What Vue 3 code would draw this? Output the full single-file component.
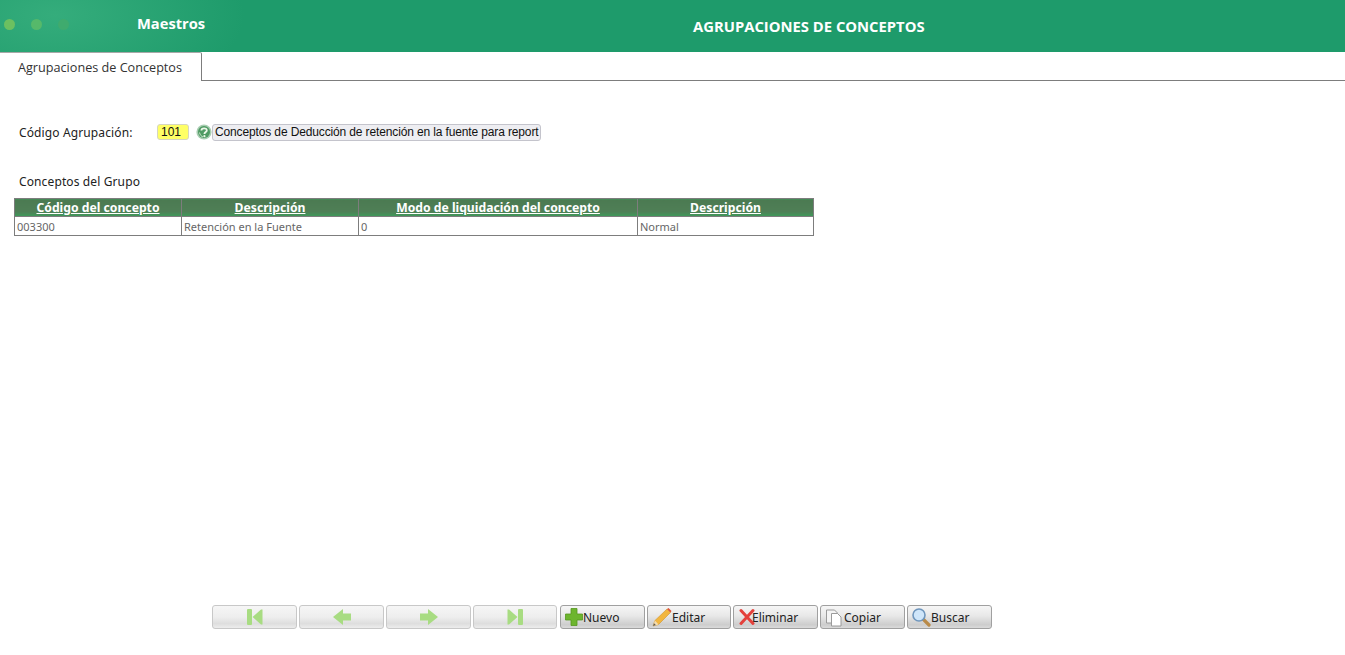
<script setup>
const columns = [
  { title: 'Código del concepto', value: '003300', width: '167px' },
  { title: 'Descripción', value: 'Retención en la Fuente', width: '177px' },
  { title: 'Modo de liquidación del concepto', value: '0', width: '279px' },
  { title: 'Descripción', value: 'Normal', width: '176px' }
]
</script>

<template>
  <div class="page">
    <header class="topbar">
      <div class="brand">
        <div class="dots">
          <span class="dot d1"></span>
          <span class="dot d2"></span>
          <span class="dot d3"></span>
        </div>
        <span class="module">Maestros</span>
      </div>
      <h1 class="title">AGRUPACIONES DE CONCEPTOS</h1>
    </header>

    <nav class="tabs">
      <div class="tab">Agrupaciones de Conceptos</div>
    </nav>

    <main class="content">
      <div class="field-row">
        <label class="label">Código Agrupación:</label>
        <div class="code">101</div>
        <svg class="help" viewBox="0 0 16 16" width="16" height="16">
          <circle cx="8" cy="8" r="7.600" fill="#a9ceb2" />
          <circle cx="8" cy="8" r="6" fill="#4f9a63" />
          <path d="M5.400 6.400C5.400 3.800 10.800 3.600 10.800 6.400 10.800 8 8.400 8 8.400 10" fill="none" stroke="#eef7ea" stroke-width="1.800" />
          <path d="M3.500 8.500C4 11 5.500 12.500 7 13" fill="none" stroke="#cfe6cf" stroke-width="1" />
          <circle cx="8.400" cy="12.200" r="1.100" fill="#eef7ea" />
        </svg>
        <div class="desc">Conceptos de Deducción de retención en la fuente para report</div>
      </div>

      <div class="group-title">Conceptos del Grupo</div>

      <table class="grid">
        <colgroup>
          <col v-for="(c, i) in columns" :key="i" :style="{ width: c.width }" />
        </colgroup>
        <thead>
          <tr>
            <th v-for="(c, i) in columns" :key="i"><a>{{ c.title }}</a></th>
          </tr>
        </thead>
        <tbody>
          <tr>
            <td v-for="(c, i) in columns" :key="i">{{ c.value }}</td>
          </tr>
        </tbody>
      </table>
    </main>

    <footer class="toolbar">
      <button class="btn nav">
        <svg viewBox="0 0 20 20" width="20" height="20">
          <rect x="2" y="2" width="5" height="16" rx="1" fill="#a8dc82" />
          <path d="M7.500 10 16 2.500h1.500v15H16z" fill="#a8dc82" />
        </svg>
      </button>
      <button class="btn nav">
        <svg viewBox="0 0 20 20" width="20" height="20">
          <path d="M1 10 11 2v4.500h8v7h-8V18z" fill="#a8dc82" />
        </svg>
      </button>
      <button class="btn nav">
        <svg viewBox="0 0 20 20" width="20" height="20">
          <path d="M19 10 9 2v4.500H1v7h8V18z" fill="#a8dc82" />
        </svg>
      </button>
      <button class="btn nav last">
        <svg viewBox="0 0 20 20" width="20" height="20">
          <rect x="13" y="2" width="5" height="16" rx="1" fill="#a8dc82" />
          <path d="M12.500 10 4 2.500H2.500v15H4z" fill="#a8dc82" />
        </svg>
      </button>
      <button class="btn add">
        <svg viewBox="0 0 20 20" width="20" height="20">
          <path d="M7 1.500h6v5.500h5.500v6H13v5.500H7V13H1.500V7H7z" fill="#6db52e" stroke="#55971f" stroke-width=".8" />
        </svg>
        <span>Nuevo</span>
      </button>
      <button class="btn edit">
        <svg viewBox="0 0 20 20" width="20" height="20">
          <path d="M1 19 3 13.500 15 2l3.500 3.500L6.500 17.500z" fill="#f2b63f" stroke="#d0932c" stroke-width=".6" />
          <path d="M15 2l3.500 3.500 1-1.500L16.500 1z" fill="#e0553d" />
          <path d="M1 19 3 13.500 6.500 17.500z" fill="#f3dcb0" />
          <path d="M1 19 2 16.200 3.800 18z" fill="#555" />
        </svg>
        <span>Editar</span>
      </button>
      <button class="btn del">
        <svg viewBox="0 0 16 20" width="16" height="20">
          <path d="M2 3.500 14 16.500M14 3.500 2 16.500" fill="none" stroke="#e4413c" stroke-width="3" stroke-linecap="round" />
        </svg>
        <span>Eliminar</span>
      </button>
      <button class="btn">
        <svg viewBox="0 0 20 20" width="20" height="20">
          <path d="M2.500 3h8l3 3v10h-11z" fill="#f4f4f4" stroke="#9a9a9a" />
          <path d="M7.500 6.500h6l3.500 3.500v9H7.500z" fill="#fff" stroke="#9a9a9a" />
        </svg>
        <span>Copiar</span>
      </button>
      <button class="btn">
        <svg viewBox="0 0 20 20" width="20" height="20">
          <path d="M12 12l6 6" stroke="#b98a48" stroke-width="3.200" stroke-linecap="round" />
          <circle cx="8" cy="8" r="6" fill="#cfe6fa" stroke="#6f96bd" stroke-width="1.600" />
        </svg>
        <span>Buscar</span>
      </button>
    </footer>
  </div>
</template>

<style>
html,
body {
  margin: 0;
  background: #fff;
}
</style>

<style scoped>
.page {
  width: 1345px;
  height: 655px;
  display: flex;
  flex-direction: column;
  overflow: hidden;
  background: #fff;
}

.topbar {
  height: 52px;
  flex: none;
  display: flex;
  background:
    radial-gradient(ellipse 190px 90px at 55px 15px, rgba(75, 190, 140, 0.5), rgba(30, 155, 107, 0) 100%),
    #1e9b6b;
  color: #fff;
  font-family: "Open Sans", sans-serif;
  font-weight: 700;
}

.brand {
  width: 272px;
  flex: none;
  display: flex;
  align-items: center;
  padding-bottom: 4px;
  box-sizing: border-box;
}

.dots {
  width: 137px;
  flex: none;
  display: flex;
  gap: 16px;
  padding-left: 4px;
  box-sizing: border-box;
}

.dot {
  width: 11px;
  height: 11px;
  border-radius: 50%;
}

.d1 { background: #6cc060; }
.d2 { background: #56b96a; }
.d3 { background: #3fab6e; }

.module {
  font-size: 14.700px;
  line-height: 16px;
  margin-top: -2px;
}

.title {
  margin: 0;
  flex: 1;
  padding: 17px 0 0 421px;
  font-size: 14.800px;
  line-height: 18px;
  font-weight: 700;
}

.tabs {
  height: 29px;
  flex: none;
  box-sizing: border-box;
  border-bottom: 1px solid #7d7d7d;
  display: flex;
}

.tab {
  width: 202px;
  height: 29px;
  box-sizing: border-box;
  padding: 7px 0 0 18px;
  background: #fff;
  border-right: 1px solid #7d7d7d;
  border-top: 1px solid #a8a8a8;
  border-top-right-radius: 2px;
  font-family: "Open Sans", sans-serif;
  font-size: 12.650px;
  line-height: 15px;
  color: #333;
}

.content {
  flex: 1;
  padding: 42px 0 0 14px;
}

.field-row {
  display: flex;
  align-items: center;
  height: 18px;
  padding-left: 5px;
}

.label {
  width: 138px;
  flex: none;
  font-family: "Noto Sans", sans-serif;
  font-size: 12px;
  letter-spacing: 0.12px;
  color: #222;
}

.code {
  width: 32px;
  height: 16px;
  flex: none;
  box-sizing: border-box;
  background: #ffff66;
  border: 1px solid #d6d6c0;
  border-radius: 3px;
  padding-left: 3px;
  font-family: "Liberation Sans", sans-serif;
  font-size: 12px;
  line-height: 14px;
  color: #111;
}

.help {
  margin: 0 0 0 7px;
  flex: none;
}

.desc {
  width: 329px;
  height: 17px;
  flex: none;
  box-sizing: border-box;
  background: #eeeef2;
  border: 1px solid #c4c4cc;
  border-radius: 3px;
  padding-left: 2px;
  font-family: "Liberation Sans", sans-serif;
  font-size: 12px;
  letter-spacing: -0.135px;
  line-height: 15px;
  white-space: nowrap;
  overflow: hidden;
  color: #111;
}

.group-title {
  margin: 32px 0 0 5px;
  height: 17px;
  font-family: "Noto Sans", sans-serif;
  font-size: 12px;
  letter-spacing: 0.12px;
  line-height: 17px;
  color: #222;
}

.grid {
  margin-top: 8px;
  width: 800px;
  table-layout: fixed;
  border-collapse: collapse;
  border: 1px solid #7d7d7d;
  font-family: "Noto Sans", sans-serif;
  font-size: 11px;
}

.grid th {
  height: 17px;
  padding: 0;
  border: 1px solid #7d7d7d;
  background: linear-gradient(#4b7a52 0%, #4f7f56 72%, #3c9c5a 100%);
  color: #fff;
  font-size: 12.200px;
  font-weight: 700;
  line-height: 15px;
}

.grid th a {
  text-decoration: underline;
}

.grid td {
  height: 19px;
  padding: 2px 0 0 2px;
  box-sizing: border-box;
  border: 1px solid #7d7d7d;
  color: #666;
  line-height: 16px;
  white-space: nowrap;
  overflow: hidden;
}

.toolbar {
  flex: none;
  height: 50px;
  padding-left: 212px;
  display: flex;
  align-items: flex-start;
  gap: 2px;
}

.btn {
  width: 85px;
  height: 24px;
  flex: none;
  margin: 0;
  padding: 0 0 0 3px;
  box-sizing: border-box;
  display: flex;
  align-items: center;
  border: 1px solid #a0a0a0;
  border-radius: 3px;
  background: linear-gradient(#f6f6f6 0%, #e8e8e8 45%, #cdcdcd 85%, #dadada 100%);
  font-family: "Noto Sans", sans-serif;
  font-size: 12px;
  color: #222;
}

.btn.nav {
  justify-content: center;
  padding: 0;
  border-color: #c8c8c8;
  background: linear-gradient(#f6f6f6 0%, #eeeeee 50%, #dedede 80%, #ececec 100%);
}

.btn.nav.last {
  width: 84px;
  margin-right: 1px;
}

.btn svg {
  flex: none;
}

.btn.add svg {
  margin-right: -1px;
}

.btn.edit {
  width: 84px;
}

.btn.edit svg {
  margin-left: 1px;
}

.btn.del svg {
  margin: 0 -3px 0 2px;
}
</style>
